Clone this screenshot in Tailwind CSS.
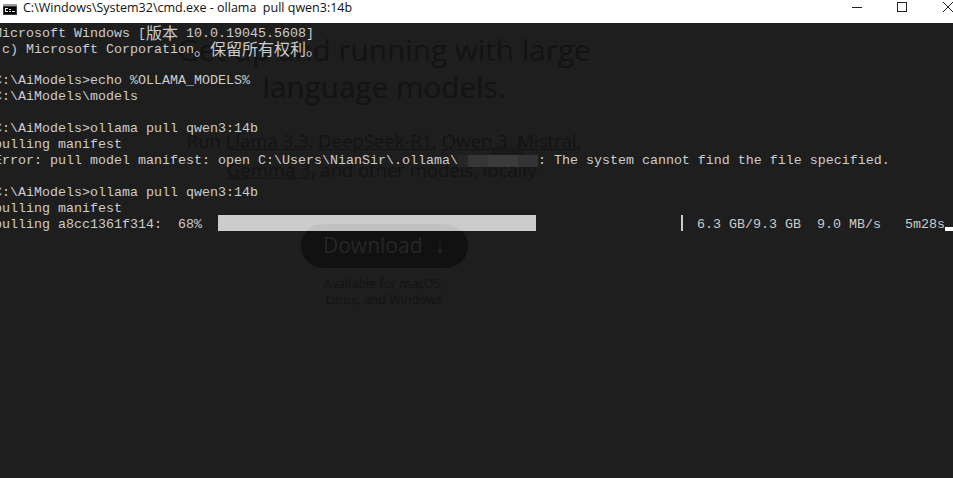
<!DOCTYPE html>
<html lang="en">
<head>
  <meta charset="UTF-8">
  <title>cmd.exe - ollama pull qwen3:14b</title>
  <script src="https://cdn.jsdelivr.net/npm/@tailwindcss/browser@4"></script>
</head>
<body class="w-[953px] h-[478px] overflow-hidden bg-[#1e1e1e]">

  <!-- title bar -->
  <div class="flex items-center justify-between h-[23px] bg-white">
    <div class="flex items-center h-full">
      <svg class="ml-[3px] mb-[4px]" width="14" height="11" viewBox="0 0 14 11">
        <rect width="14" height="11" fill="#3a3a3a"/>
        <rect x="0" y="0" width="14" height="2" fill="#9a9a9a"/>
        <rect x="1" y="3" width="12" height="7" fill="#000"/>
        <path d="M2 4h3v1H3v2h2v1H2zM6 5h2v1H6zM6 7h2v1H6zM9 7h3v1H9z" fill="#e8e8e8"/>
      </svg>
      <span class="ml-[6px] mb-[7px] text-[12.5px] leading-[16px] text-[#111] whitespace-pre font-['Open_Sans',sans-serif]">C:\Windows\System32\cmd.exe - ollama  pull qwen3:14b</span>
    </div>
    <div class="flex items-start h-full">
      <div class="w-[10px] h-[1px] mt-[7px] bg-[#222]"></div>
      <div class="w-[10px] h-[10px] mt-[2px] ml-[35px] border border-[#222]"></div>
      <svg class="mt-[2px] ml-[36px]" width="10" height="10" viewBox="0 0 10 10">
        <path d="M0 0L10 10M10 0L0 10" stroke="#222" fill="none"/>
      </svg>
    </div>
  </div>

  <!-- console -->
  <div class="relative h-[455px] bg-[#1e1e1e] overflow-hidden">

    <!-- page showing through the window -->
    <div class="absolute left-[150px] top-[8px] w-[468px] flex flex-col items-center text-[#131313] font-['Open_Sans',sans-serif]">
      <h1 class="text-[29.7px] leading-[37px] text-center">Get up and running with large<br>language models.</h1>
      <p class="mt-[21px] text-[18.5px] leading-[29px] text-center">Run <span class="underline">Llama 3.3</span>, <span class="underline">DeepSeek-R1</span>, <span class="underline">Qwen 3</span>, <span class="underline">Mistral</span>,<br><span class="underline">Gemma 3</span>, and other models, locally.</p>
      <div class="flex items-center justify-center gap-3 mt-[40px] w-[167px] h-[44px] rounded-full bg-[#111] text-[#262626] text-[21px]">Download <span>↓</span></div>
      <p class="mt-[8px] text-[12.5px] leading-[16px] text-center">Available for macOS,<br>Linux, and Windows</p>
    </div>

    <!-- terminal text -->
    <div class="relative ml-[-6px] text-[#cccccc] text-[13.334px] leading-[20px] font-['Liberation_Mono','Noto_Sans_CJK_SC',monospace]">
      <div class="h-4 whitespace-pre">Microsoft Windows [<span class="relative top-[2px] text-[16px]">版本</span> 10.0.19045.5608]</div>
      <div class="h-4 whitespace-pre">(c) Microsoft Corporation<span class="relative top-[2px] text-[16px]">。保留所有权利。</span></div>
      <div class="h-4"></div>
      <div class="h-4 whitespace-pre">C:\AiModels&gt;echo %OLLAMA_MODELS%</div>
      <div class="h-4 whitespace-pre">C:\AiModels\models</div>
      <div class="h-4"></div>
      <div class="h-4 whitespace-pre">C:\AiModels&gt;ollama pull qwen3:14b</div>
      <div class="h-4 whitespace-pre">pulling manifest</div>
      <div class="flex h-4 whitespace-pre">
        <span>Error: pull model manifest: open C:\Users\NianSir\.ollama\</span>
        <span class="relative flex items-end w-[80px] h-4">
          <span class="absolute left-[34px] top-[-4px] w-[30px] h-[8px] bg-[#191919]"></span>
          <span class="relative w-[10px] h-[12px] bg-[#262626]"></span>
          <span class="relative w-[20px] h-[12px] bg-[#363636]"></span>
          <span class="relative w-[30px] h-[12px] bg-[#3b3b3b]"></span>
          <span class="relative w-[20px] h-[12px] bg-[#343434]"></span>
        </span>
        <span>: The system cannot find the file specified.</span>
      </div>
      <div class="h-4"></div>
      <div class="h-4 whitespace-pre">C:\AiModels&gt;ollama pull qwen3:14b</div>
      <div class="h-4 whitespace-pre">pulling manifest</div>
      <div class="flex items-start h-4 whitespace-pre">
        <span>pulling a8cc1361f314:  68%  </span>
        <span class="relative overflow-hidden w-[319px] h-4 bg-[#cccccc]">
          <span class="absolute left-[82px] top-[9px] w-[167px] h-[44px] rounded-full bg-black/5"></span>
        </span>
        <span class="w-[145px]"></span>
        <span class="w-[2px] h-4 bg-[#cccccc]"></span>
        <span class="ml-[14px]">6.3 GB/9.3 GB  9.0 MB/s   5m28s</span>
        <span class="self-end w-[8px] h-[4px] bg-white"></span>
      </div>
    </div>
  </div>

</body>
</html>
